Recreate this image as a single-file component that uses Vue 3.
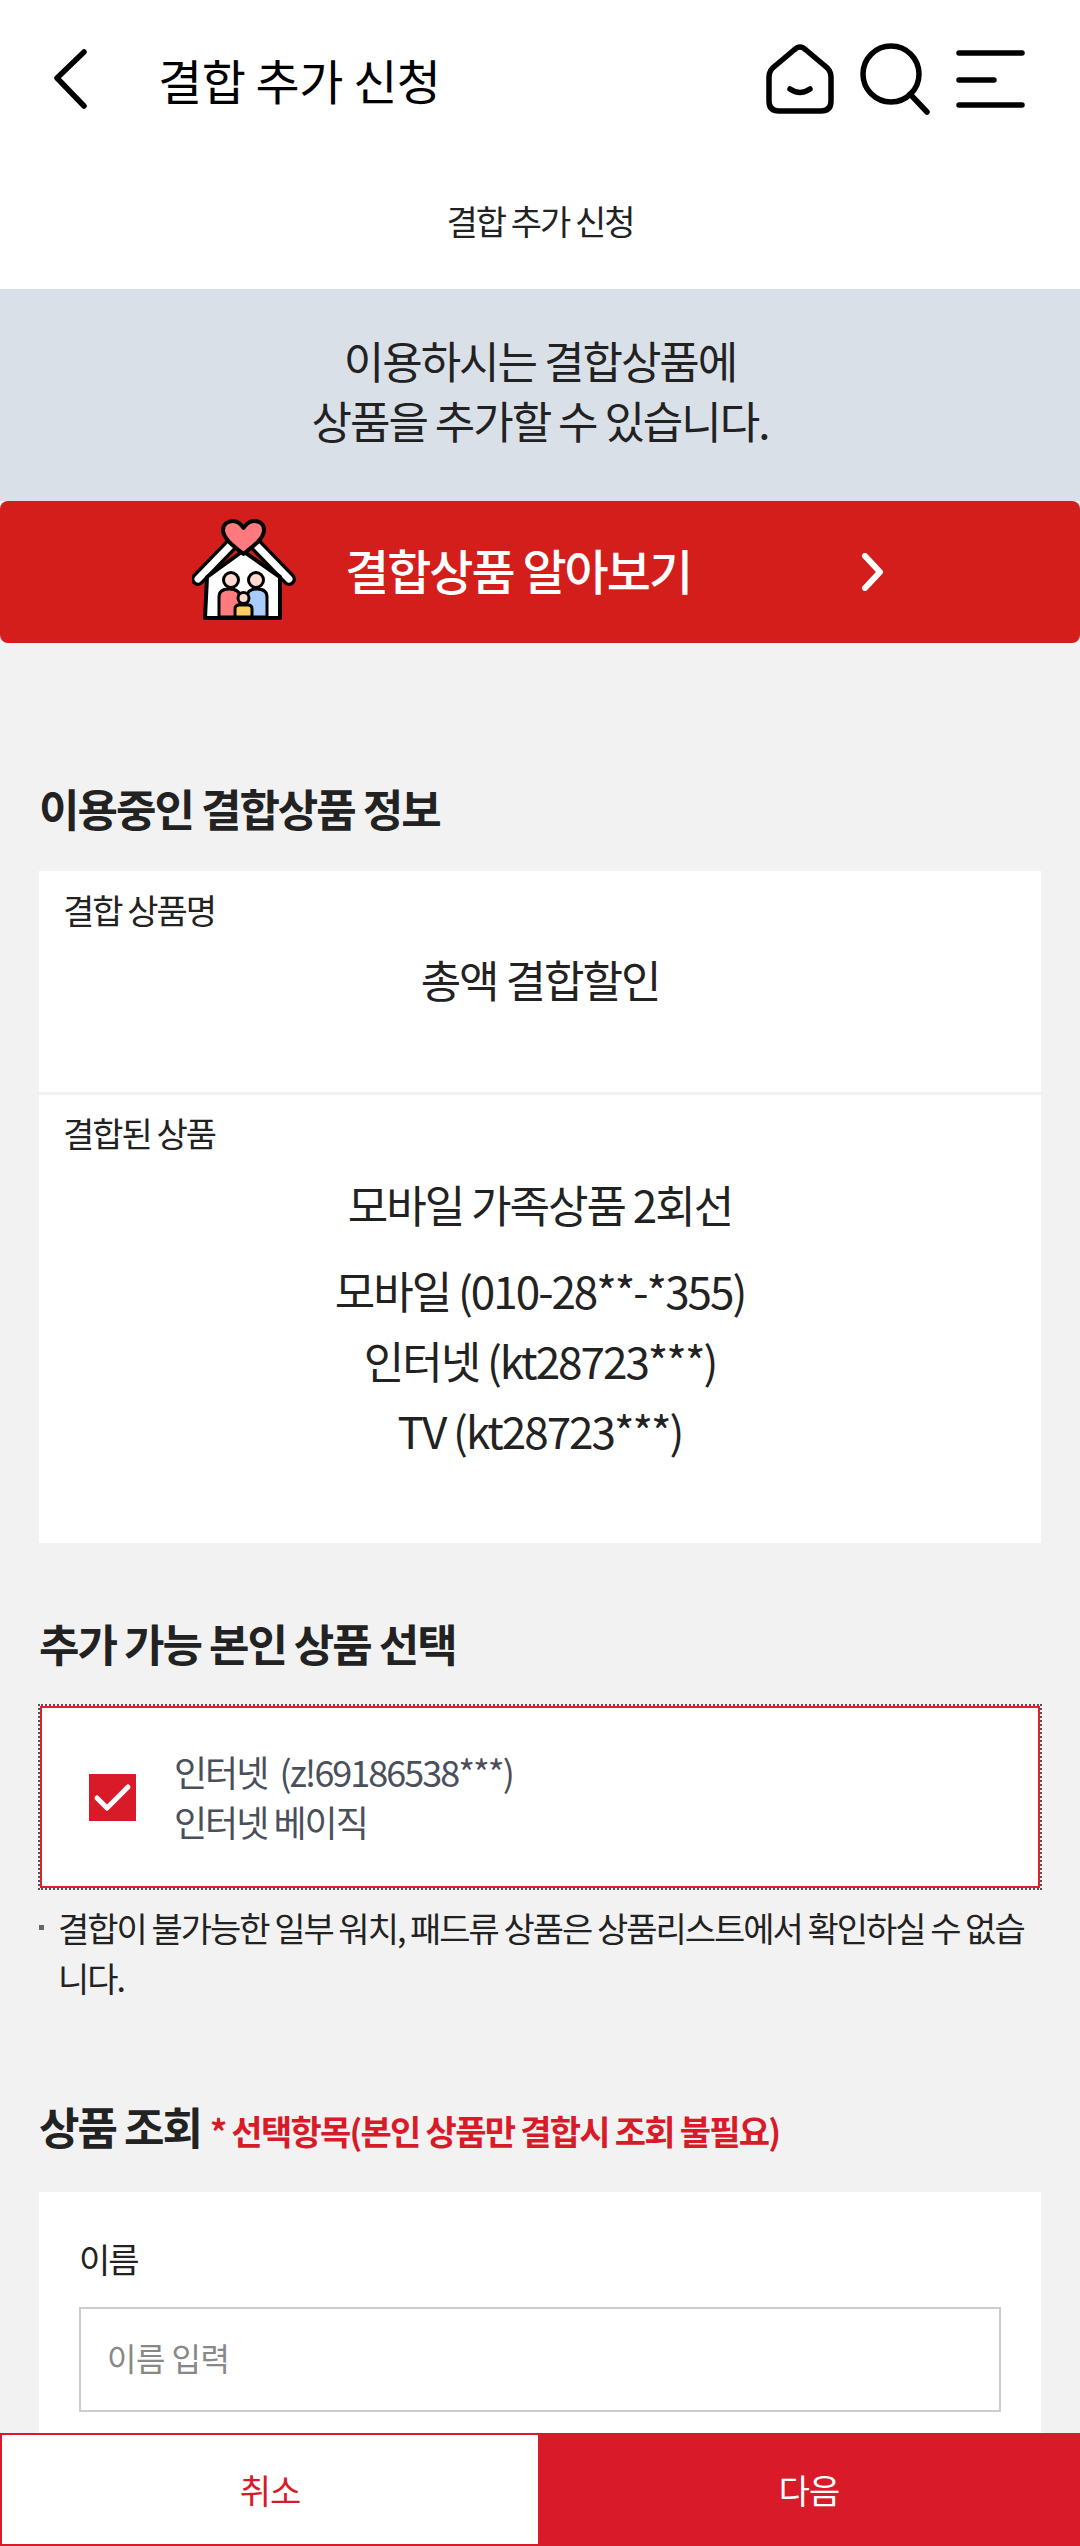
<script setup>
const productLines = ['모바일 (010-28**-*355)', '인터넷 (kt28723***)', 'TV (kt28723***)']
</script>

<template>
  <div class="page">
    <header class="top">
      <svg class="back" width="40" height="64" viewBox="0 0 40 64"><path d="M32 5 L5 31 L32 59" /></svg>
      <h1>결합 추가 신청</h1>
      <div class="icons">
        <svg width="76" height="76" viewBox="0 0 76 76"><path d="M38 6 Q41 6 44 9 L63 25 Q69 29 69 36 V60 Q69 70 59 70 H17 Q7 70 7 60 V36 Q7 29 13 25 L32 9 Q35 6 38 6Z M28 48 Q38 55 48 48" /></svg>
        <svg width="80" height="80" viewBox="0 0 80 80"><circle cx="35" cy="35" r="28" /><path d="M54 55 L71 73" /></svg>
        <svg width="76" height="60" viewBox="0 0 76 60"><path d="M5 4 H68 M5 31 H40 M5 56 H68" /></svg>
      </div>
    </header>
    <div class="subtitle">결합 추가 신청</div>
    <section class="notice">이용하시는 결합상품에<br />상품을 추가할 수 있습니다.</section>
    <div class="promo">
      <svg class="house" width="104" height="104" viewBox="0 0 104 104">
        <path d="M6 60 L38 27 M97 60 L65 27" fill="none" stroke="#000" stroke-width="14" stroke-linecap="round" />
        <path d="M6 60 L38 27 M97 60 L65 27" fill="none" stroke="#fff" stroke-width="7" stroke-linecap="round" />
        <path d="M15 58 L51 32 L88 58 V99 H13 Z" fill="#fff" stroke="#000" stroke-width="4" stroke-linejoin="round" />
        <path d="M27 98 V78 Q27 70 37 70 Q48 70 48 78 V98 Z" fill="#ff7c7e" stroke="#000" stroke-width="3" />
        <path d="M55 98 V78 Q55 70 65 70 Q75 70 75 78 V98 Z" fill="#a8cdfb" stroke="#000" stroke-width="3" />
        <circle cx="39" cy="61" r="7.5" fill="#ffd8d0" stroke="#000" stroke-width="3" />
        <circle cx="64" cy="61" r="7.5" fill="#ffd8d0" stroke="#000" stroke-width="3" />
        <path d="M43 98 V90 Q43 86 47 86 H56 Q60 86 60 90 V98 Z" fill="#ffce63" stroke="#000" stroke-width="3" />
        <circle cx="51.5" cy="79" r="5.5" fill="#ffd8d0" stroke="#000" stroke-width="3" />
        <path d="M51.5 35 C40 26 31 19 31 11 C31 5 36 2 41 2 C46 2 49 5 51.5 9 C54 5 57 2 62 2 C68 2 72 5 72 11 C72 19 63 26 51.5 35Z" fill="#ff7a7c" stroke="#000" stroke-width="4" stroke-linejoin="round" />
      </svg>
      <span class="promo-text">결합상품 알아보기</span>
      <svg class="promo-arrow" width="24" height="38" viewBox="0 0 24 38"><path d="M4 3 L19 19 L4 35" /></svg>
    </div>

    <h2 class="first">이용중인 결합상품 정보</h2>
    <div class="card card-name">
      <div class="label">결합 상품명</div>
      <div class="value">총액 결합할인</div>
    </div>
    <div class="card card-products">
      <div class="label">결합된 상품</div>
      <div class="value family">모바일 가족상품 2회선</div>
      <div class="lines">
        <div v-for="line in productLines" :key="line">{{ line }}</div>
      </div>
    </div>

    <h2 class="second">추가 가능 본인 상품 선택</h2>
    <div class="select">
      <span class="check">
        <svg width="47" height="47" viewBox="0 0 47 47"><path d="M8 24 L18 34 L39 13" /></svg>
      </span>
      <div class="select-text">
        <div>인터넷 &nbsp;(z!69186538***)</div>
        <div>인터넷 베이직</div>
      </div>
    </div>
    <p class="note">결합이 불가능한 일부 워치, 패드류 상품은 상품리스트에서 확인하실 수 없습니다.</p>

    <h2 class="third">상품 조회 <small>* 선택항목(본인 상품만 결합시 조회 불필요)</small></h2>
    <div class="form">
      <label class="form-label" for="name">이름</label>
      <input id="name" class="input" type="text" placeholder="이름 입력" />
    </div>

    <footer class="bottom">
      <button class="cancel" type="button">취소</button>
      <button class="next" type="button">다음</button>
    </footer>
  </div>
</template>

<style scoped>
.page {
  height: 2546px;
  overflow: hidden;
  background: #f2f2f2;
  font-family: "Noto Sans CJK KR", "Noto Sans", sans-serif;
  color: #222;
  letter-spacing: -2px;
}
.top {
  height: 158px;
  background: #fff;
  display: flex;
  align-items: center;
  padding: 0 50px 0 52px;
  color: #000;
}
.top svg {
  fill: none;
  stroke: #000;
  stroke-width: 5.5;
  stroke-linecap: round;
  stroke-linejoin: round;
}
.top h1 {
  margin: 0 0 0 66px;
  font-size: 48px;
  line-height: 60px;
  font-weight: 400;
  letter-spacing: -0.5px;
  flex: 1;
}
.icons {
  display: flex;
  align-items: center;
  gap: 18px;
}
.subtitle {
  height: 131px;
  background: #fff;
  text-align: center;
  font-size: 34px;
  line-height: 126px;
  color: #222;
}
.notice {
  height: 212px;
  box-sizing: border-box;
  background: #d9e0e8;
  padding-top: 41px;
  text-align: center;
  font-size: 44px;
  line-height: 60px;
}
.promo {
  height: 142px;
  background: #d41e1c;
  border-radius: 8px;
  display: flex;
  align-items: center;
  padding-left: 192px;
  color: #fff;
}
.house { margin-top: -2px; }
.promo-text {
  margin: 0 0 6px 49px;
  font-size: 48px;
  font-weight: 500;
  line-height: 60px;
}
.promo-arrow {
  margin-left: 170px;
  fill: none;
  stroke: #fff;
  stroke-width: 6;
  stroke-linecap: round;
  stroke-linejoin: round;
}
h2 {
  margin: 0 39px;
  font-size: 44px;
  line-height: 60px;
  font-weight: 700;
  color: #222;
}
h2.first { margin-top: 135px; margin-bottom: 33px; }
h2.second { margin-top: 70px; margin-bottom: 33px; }
h2.third { margin-top: 93px; margin-bottom: 36px; }
h2 small {
  margin-left: 1px;
  font-size: 34px;
  line-height: 1;
  font-weight: 700;
  letter-spacing: -1.75px;
  color: #d91a28;
}
.card {
  margin: 0 39px;
  background: #fff;
  box-sizing: border-box;
  text-align: center;
  font-size: 44px;
  line-height: 50px;
}
.card-name {
  height: 221px;
  padding-top: 14px;
  margin-bottom: 3px;
}
.card-products {
  height: 448px;
  padding-top: 13px;
}
.label {
  text-align: left;
  padding-left: 24px;
  font-size: 34px;
  line-height: 50px;
}
.value { margin-top: 19px; }
.family { margin-top: 21px; }
.lines {
  margin-top: 26px;
  line-height: 70px;
}
.select {
  margin: 0 40px;
  height: 182px;
  box-sizing: border-box;
  background: #fff;
  border: 2px solid #e0202c;
  outline: 2px dotted #555;
  display: flex;
  align-items: center;
  padding-left: 47px;
}
.check {
  width: 47px;
  height: 47px;
  background: #d91a28;
  flex: none;
}
.check svg {
  display: block;
  fill: none;
  stroke: #fff;
  stroke-width: 5;
  stroke-linecap: round;
  stroke-linejoin: round;
}
.select-text {
  margin-left: 38px;
  padding-bottom: 2px;
  font-size: 36px;
  line-height: 50px;
  color: #4a4f5c;
}
.note {
  position: relative;
  margin: 15px 39px 0;
  padding-left: 19px;
  font-size: 34px;
  line-height: 50px;
  color: #222;
  word-break: break-all;
}
.note::before {
  content: "";
  position: absolute;
  left: 0;
  top: 22px;
  width: 5px;
  height: 5px;
  background: #666;
}
.form {
  margin: 0 39px;
  height: 300px;
  box-sizing: border-box;
  background: #fff;
  padding: 42px 40px 0;
}
.form-label {
  display: block;
  font-size: 34px;
  line-height: 50px;
  color: #222;
}
.input {
  display: block;
  width: 100%;
  height: 105px;
  margin-top: 23px;
  box-sizing: border-box;
  border: 2px solid #ccc;
  border-radius: 0;
  background: #fff;
  padding: 0 26px 6px;
  font: inherit;
  font-size: 32px;
  letter-spacing: -0.5px;
  outline: none;
}
.input::placeholder { color: #888; opacity: 1; }
.bottom {
  position: fixed;
  left: 0;
  right: 0;
  bottom: 0;
  height: 113px;
  display: flex;
}
.bottom button {
  margin: 0;
  padding: 0;
  font-family: inherit;
  font-size: 34px;
  letter-spacing: -1px;
  border-radius: 0;
}
.cancel {
  width: 538px;
  background: #fff;
  color: #d91a28;
  border: 2px solid #d91a28;
  border-right: 0;
}
.next {
  flex: 1;
  background: #d91a28;
  color: #fff;
  border: 0;
}
</style>
